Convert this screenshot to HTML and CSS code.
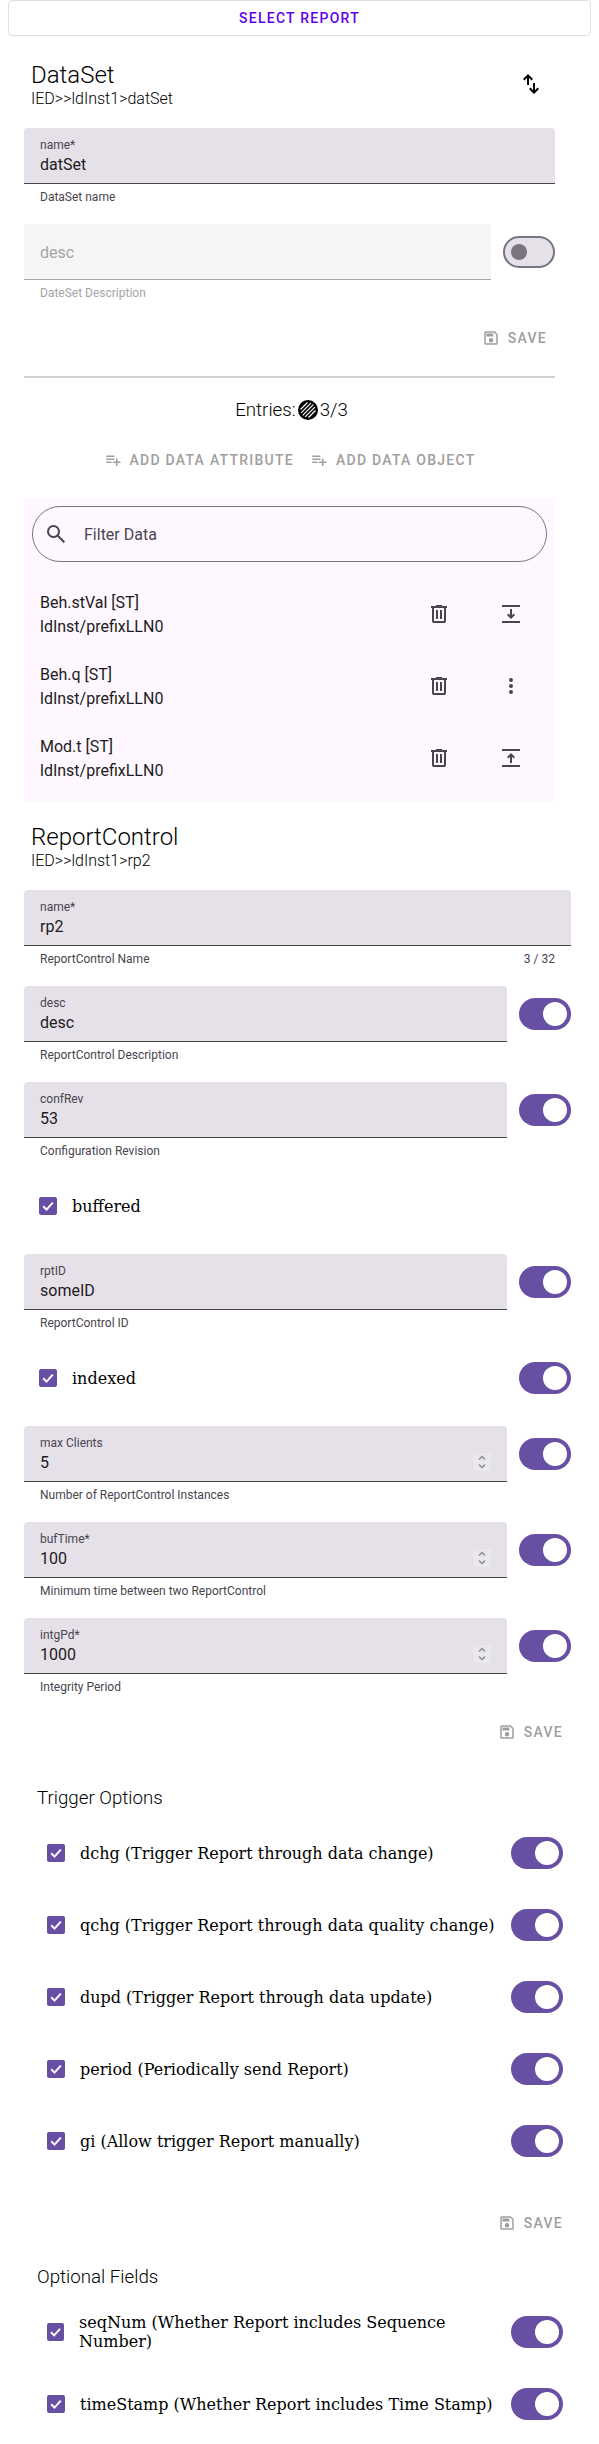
FILE: index.html
```
<!DOCTYPE html>
<html lang="en">
<head>
<meta charset="utf-8">
<title>Report Control</title>
<link rel="stylesheet" href="styles.css">
</head>
<body>
<svg class="sprite" aria-hidden="true">
  <symbol id="save" viewBox="0 0 24 24"><path fill-rule="evenodd" d="M17 3H5a2 2 0 0 0-2 2v14a2 2 0 0 0 2 2h14a2 2 0 0 0 2-2V7l-4-4zm2 16H5V5h11.2L19 7.8V19zM12 12a3 3 0 1 0 0 6 3 3 0 0 0 0-6zM6 6h9v4H6z"/></symbol>
  <symbol id="add" viewBox="0 0 24 24"><path d="M14 10H3v2h11v-2zm0-4H3v2h11V6zm4 8v-4h-2v4h-4v2h4v4h2v-4h4v-2h-4zM3 16h7v-2H3v2z"/></symbol>
  <symbol id="trash" viewBox="0 0 24 24"><path d="M7 21q-.83 0-1.41-.59T5 19V6H4V4h5V3h6v1h5v2h-1v13q0 .83-.59 1.41T17 21H7zM17 6H7v13h10V6zM9 17h2V8H9v9zm4 0h2V8h-2v9z"/></symbol>
  <symbol id="down" viewBox="0 0 24 24"><path d="M3 21v-2h18v2H3zM12 17l-4-4 1.4-1.4 1.6 1.55V7h2v6.15l1.6-1.55L16 13l-4 4zM3 5V3h18v2H3z" /></symbol>
  <symbol id="up" viewBox="0 0 24 24"><path d="M3 21v-2h18v2H3zM11 17v-6.15L9.4 12.4 8 11l4-4 4 4-1.4 1.4-1.6-1.55V17h-2zM3 5V3h18v2H3z"/></symbol>
  <symbol id="more" viewBox="0 0 24 24"><circle cx="12" cy="6" r="2"/><circle cx="12" cy="12" r="2"/><circle cx="12" cy="18" r="2"/></symbol>
  <symbol id="search" viewBox="0 0 24 24"><path d="M19.6 21l-6.3-6.3A6.1 6.1 0 0 1 9.5 16 6.5 6.5 0 1 1 16 9.500a6.100 6.100 0 0 1-1.300 3.800l6.300 6.300-1.400 1.400zM9.500 14A4.500 4.500 0 1 0 5 9.500 4.500 4.500 0 0 0 9.500 14z"/></symbol>
  <symbol id="swap" viewBox="0 0 24 24"><path d="M8 13V5.825L5.425 8.400 4 7l5-5 5 5-1.425 1.400L10 5.825V13H8zm7 9l-5-5 1.425-1.400L14 18.175V11h2v7.175l2.575-2.575L20 17l-5 5z"/></symbol>
  <symbol id="check" viewBox="0 0 18 18"><path d="M4.200 9.300l3.300 3.300 6.300-7" fill="none" stroke="#fff" stroke-width="2"/></symbol>
  <symbol id="spin" viewBox="0 0 18 18"><path d="M6 6.500l3-3 3 3M6 11.500l3 3 3-3" fill="none" stroke="#8d8b91" stroke-width="1.500"/></symbol>
  <symbol id="hatch" viewBox="0 0 20 20"><circle cx="10" cy="10" r="10"/><path d="M2.500 9.500l7-7M3.100 12.900l9.800-9.800M4.700 15.300L15.300 4.700M7.100 16.900l9.800-9.800M10.500 17.500l7-7" stroke="#fff" stroke-width="1.200"/></symbol>
</svg>

<button class="select">Select Report</button>

<section class="dataset">
  <header class="head">
    <div><h2>DataSet</h2><p class="path">IED&gt;&gt;ldInst1&gt;datSet</p></div>
    <svg class="icon swap"><use href="#swap"/></svg>
  </header>
  <div class="row"><div class="field"><div class="box"><span class="label">name*</span><span class="value">datSet</span></div><div class="help"><span>DataSet name</span></div></div></div>
  <div class="row"><div class="field disabled"><div class="box"><span class="value">desc</span></div><div class="help"><span>DateSet Description</span></div></div><span class="switch off"></span></div>
  <div class="actions"><button class="btn"><svg><use href="#save"/></svg>Save</button></div>
  <hr>
  <h3 class="entries">Entries:<svg><use href="#hatch"/></svg>3/3</h3>
  <div class="adders">
    <button class="btn"><svg><use href="#add"/></svg>Add data attribute</button>
    <button class="btn"><svg><use href="#add"/></svg>Add data object</button>
  </div>
  <div class="list">
    <div class="search"><svg class="icon"><use href="#search"/></svg><span>Filter Data</span></div>
    <div class="item"><div class="text"><span>Beh.stVal [ST]</span><span>ldInst/prefixLLN0</span></div><svg class="icon"><use href="#trash"/></svg><svg class="icon"><use href="#down"/></svg></div>
    <div class="item"><div class="text"><span>Beh.q [ST]</span><span>ldInst/prefixLLN0</span></div><svg class="icon"><use href="#trash"/></svg><svg class="icon"><use href="#more"/></svg></div>
    <div class="item"><div class="text"><span>Mod.t [ST]</span><span>ldInst/prefixLLN0</span></div><svg class="icon"><use href="#trash"/></svg><svg class="icon"><use href="#up"/></svg></div>
  </div>
</section>

<section class="report">
  <header class="head">
    <div><h2>ReportControl</h2><p class="path">IED&gt;&gt;ldInst1&gt;rp2</p></div>
  </header>
  <div class="row"><div class="field"><div class="box"><span class="label">name*</span><span class="value">rp2</span></div><div class="help"><span>ReportControl Name</span><span>3 / 32</span></div></div></div>
  <div class="row"><div class="field"><div class="box"><span class="label">desc</span><span class="value">desc</span></div><div class="help"><span>ReportControl Description</span></div></div><span class="switch"></span></div>
  <div class="row"><div class="field"><div class="box"><span class="label">confRev</span><span class="value">53</span></div><div class="help"><span>Configuration Revision</span></div></div><span class="switch"></span></div>
  <div class="checkrow tall"><svg class="check"><use href="#check"/></svg><span>buffered</span></div>
  <div class="row"><div class="field"><div class="box"><span class="label">rptID</span><span class="value">someID</span></div><div class="help"><span>ReportControl ID</span></div></div><span class="switch"></span></div>
  <div class="checkrow tall"><svg class="check"><use href="#check"/></svg><span>indexed</span><span class="switch"></span></div>
  <div class="row"><div class="field"><div class="box"><span class="label">max Clients</span><span class="value">5</span><svg class="spin"><use href="#spin"/></svg></div><div class="help"><span>Number of ReportControl Instances</span></div></div><span class="switch"></span></div>
  <div class="row"><div class="field"><div class="box"><span class="label">bufTime*</span><span class="value">100</span><svg class="spin"><use href="#spin"/></svg></div><div class="help"><span>Minimum time between two ReportControl</span></div></div><span class="switch"></span></div>
  <div class="row"><div class="field"><div class="box"><span class="label">intgPd*</span><span class="value">1000</span><svg class="spin"><use href="#spin"/></svg></div><div class="help"><span>Integrity Period</span></div></div><span class="switch"></span></div>
  <div class="actions"><button class="btn"><svg><use href="#save"/></svg>Save</button></div>

  <div class="group trigger">
    <h3>Trigger Options</h3>
    <div class="checkrow"><svg class="check"><use href="#check"/></svg><span>dchg (Trigger Report through data change)</span><span class="switch"></span></div>
    <div class="checkrow"><svg class="check"><use href="#check"/></svg><span>qchg (Trigger Report through data quality change)</span><span class="switch"></span></div>
    <div class="checkrow"><svg class="check"><use href="#check"/></svg><span>dupd (Trigger Report through data update)</span><span class="switch"></span></div>
    <div class="checkrow"><svg class="check"><use href="#check"/></svg><span>period (Periodically send Report)</span><span class="switch"></span></div>
    <div class="checkrow"><svg class="check"><use href="#check"/></svg><span>gi (Allow trigger Report manually)</span><span class="switch"></span></div>
  </div>
  <div class="actions late"><button class="btn"><svg><use href="#save"/></svg>Save</button></div>

  <div class="group optional">
    <h3>Optional Fields</h3>
    <div class="checkrow"><svg class="check narrow"><use href="#check"/></svg><span>seqNum (Whether Report includes Sequence Number)</span><span class="switch"></span></div>
    <div class="checkrow"><svg class="check"><use href="#check"/></svg><span>timeStamp (Whether Report includes Time Stamp)</span><span class="switch"></span></div>
  </div>
</section>
</body>
</html>
```
FILE: styles.css
```
* { box-sizing: border-box; }
body { margin: 0 8px; height: 2444px; overflow: hidden; background: #fff; color: #000; font-family: Roboto, sans-serif; }
.sprite { position: absolute; width: 0; height: 0; }
svg { flex: none; fill: currentColor; }
h2, h3, p { margin: 0; font-weight: 300; }
button { font: 500 14px/34px Roboto, sans-serif; letter-spacing: 1.25px; text-transform: uppercase; background: none; border: 0; padding: 0; }
.select { display: block; width: 100%; height: 36px; border: 1px solid #e0e0e0; border-radius: 4px; color: #6200ee; }
.icon { width: 24px; height: 24px; }

.dataset { width: 531px; margin-left: 16px; }
.report { width: 547px; margin-left: 16px; }
.head { display: flex; justify-content: space-between; height: 92px; padding: 24px 12px 0 7px; }
.report .head { height: 88px; padding-top: 20px; }
h2 { font-size: 24px; line-height: 30px; }
.path { font-size: 16px; line-height: 18px; }
.swap { margin-top: 12px; }

.row { display: flex; gap: 12px; height: 96px; }
.field { flex: 1; }
.box { display: flex; flex-direction: column; position: relative; height: 56px; padding: 9px 16px 7px; background: #e6e0e9; border-bottom: 1px solid #49454f; border-radius: 4px 4px 0 0; }
.label { font-size: 12px; line-height: 16px; color: #49454f; }
.value { font-size: 16px; line-height: 24px; color: #1d1b20; }
.help { display: flex; justify-content: space-between; padding: 5px 16px 0; font-size: 12px; line-height: 16px; color: #49454f; }
.disabled .box { justify-content: center; background: #f5f5f5; border-color: #a5a4a7; }
.disabled .value, .disabled .help { color: #a5a4a7; }
.spin { position: absolute; right: 16px; bottom: 10px; width: 18px; height: 18px; background: #e9e8ec; }

.switch { flex: none; width: 52px; height: 32px; margin-top: 12px; padding: 4px; border-radius: 16px; background: #6750a4; }
.switch::after { content: ""; display: block; width: 24px; height: 24px; margin-left: auto; border-radius: 50%; background: #fff; }
.switch.off { padding: 6px; border: 2px solid #79747e; background: #e6e0e9; }
.switch.off::after { width: 16px; height: 16px; margin-left: 0; background: #79747e; }

.actions { display: flex; justify-content: flex-end; height: 36px; }
.btn { display: flex; align-items: center; gap: 8px; height: 36px; padding: 0 8px; color: #9e9e9e; line-height: 36px; }
.btn svg { width: 18px; height: 18px; }
hr { height: 2px; margin: 20px 0 0; border: 0; background: #d1d1d1; }
h3 { font-size: 18.72px; line-height: 22px; }
.entries { display: flex; justify-content: center; align-items: center; gap: 2px; margin-top: 21px; padding-left: 4px; }
.entries svg { width: 20px; height: 20px; }
.adders { display: flex; justify-content: center; margin: 21px 0 20px; }

.list { height: 304px; padding: 8px; background: #fef7ff; color: #49454f; }
.search { display: flex; align-items: center; gap: 16px; height: 56px; margin-bottom: 16px; padding: 0 11px; border: 1px solid #79747e; border-radius: 28px; font-size: 16px; }
.item { display: flex; align-items: center; height: 72px; padding: 0 24px 0 8px; gap: 48px; }
.text { display: flex; flex-direction: column; flex: 1; padding-top: 2px; font-size: 16px; line-height: 24px; color: #1d1b20; }

.checkrow { display: flex; align-items: center; height: 72px; font: 16px/19px "DejaVu Serif", serif; }
.checkrow .switch { margin: 0 0 0 auto; }
.check { width: 18px; height: 18px; margin: 0 15px; border-radius: 2px; background: #6750a4; }
.check.narrow { width: 17px; }
.tall { height: 56px; margin-bottom: 20px; }
.group { padding: 0 8px; }
.group h3 { padding-left: 5px; margin-bottom: 8px; }
.trigger { margin-top: 37px; }
.late { margin-top: 28px; }
.optional { margin-top: 25px; }
```
